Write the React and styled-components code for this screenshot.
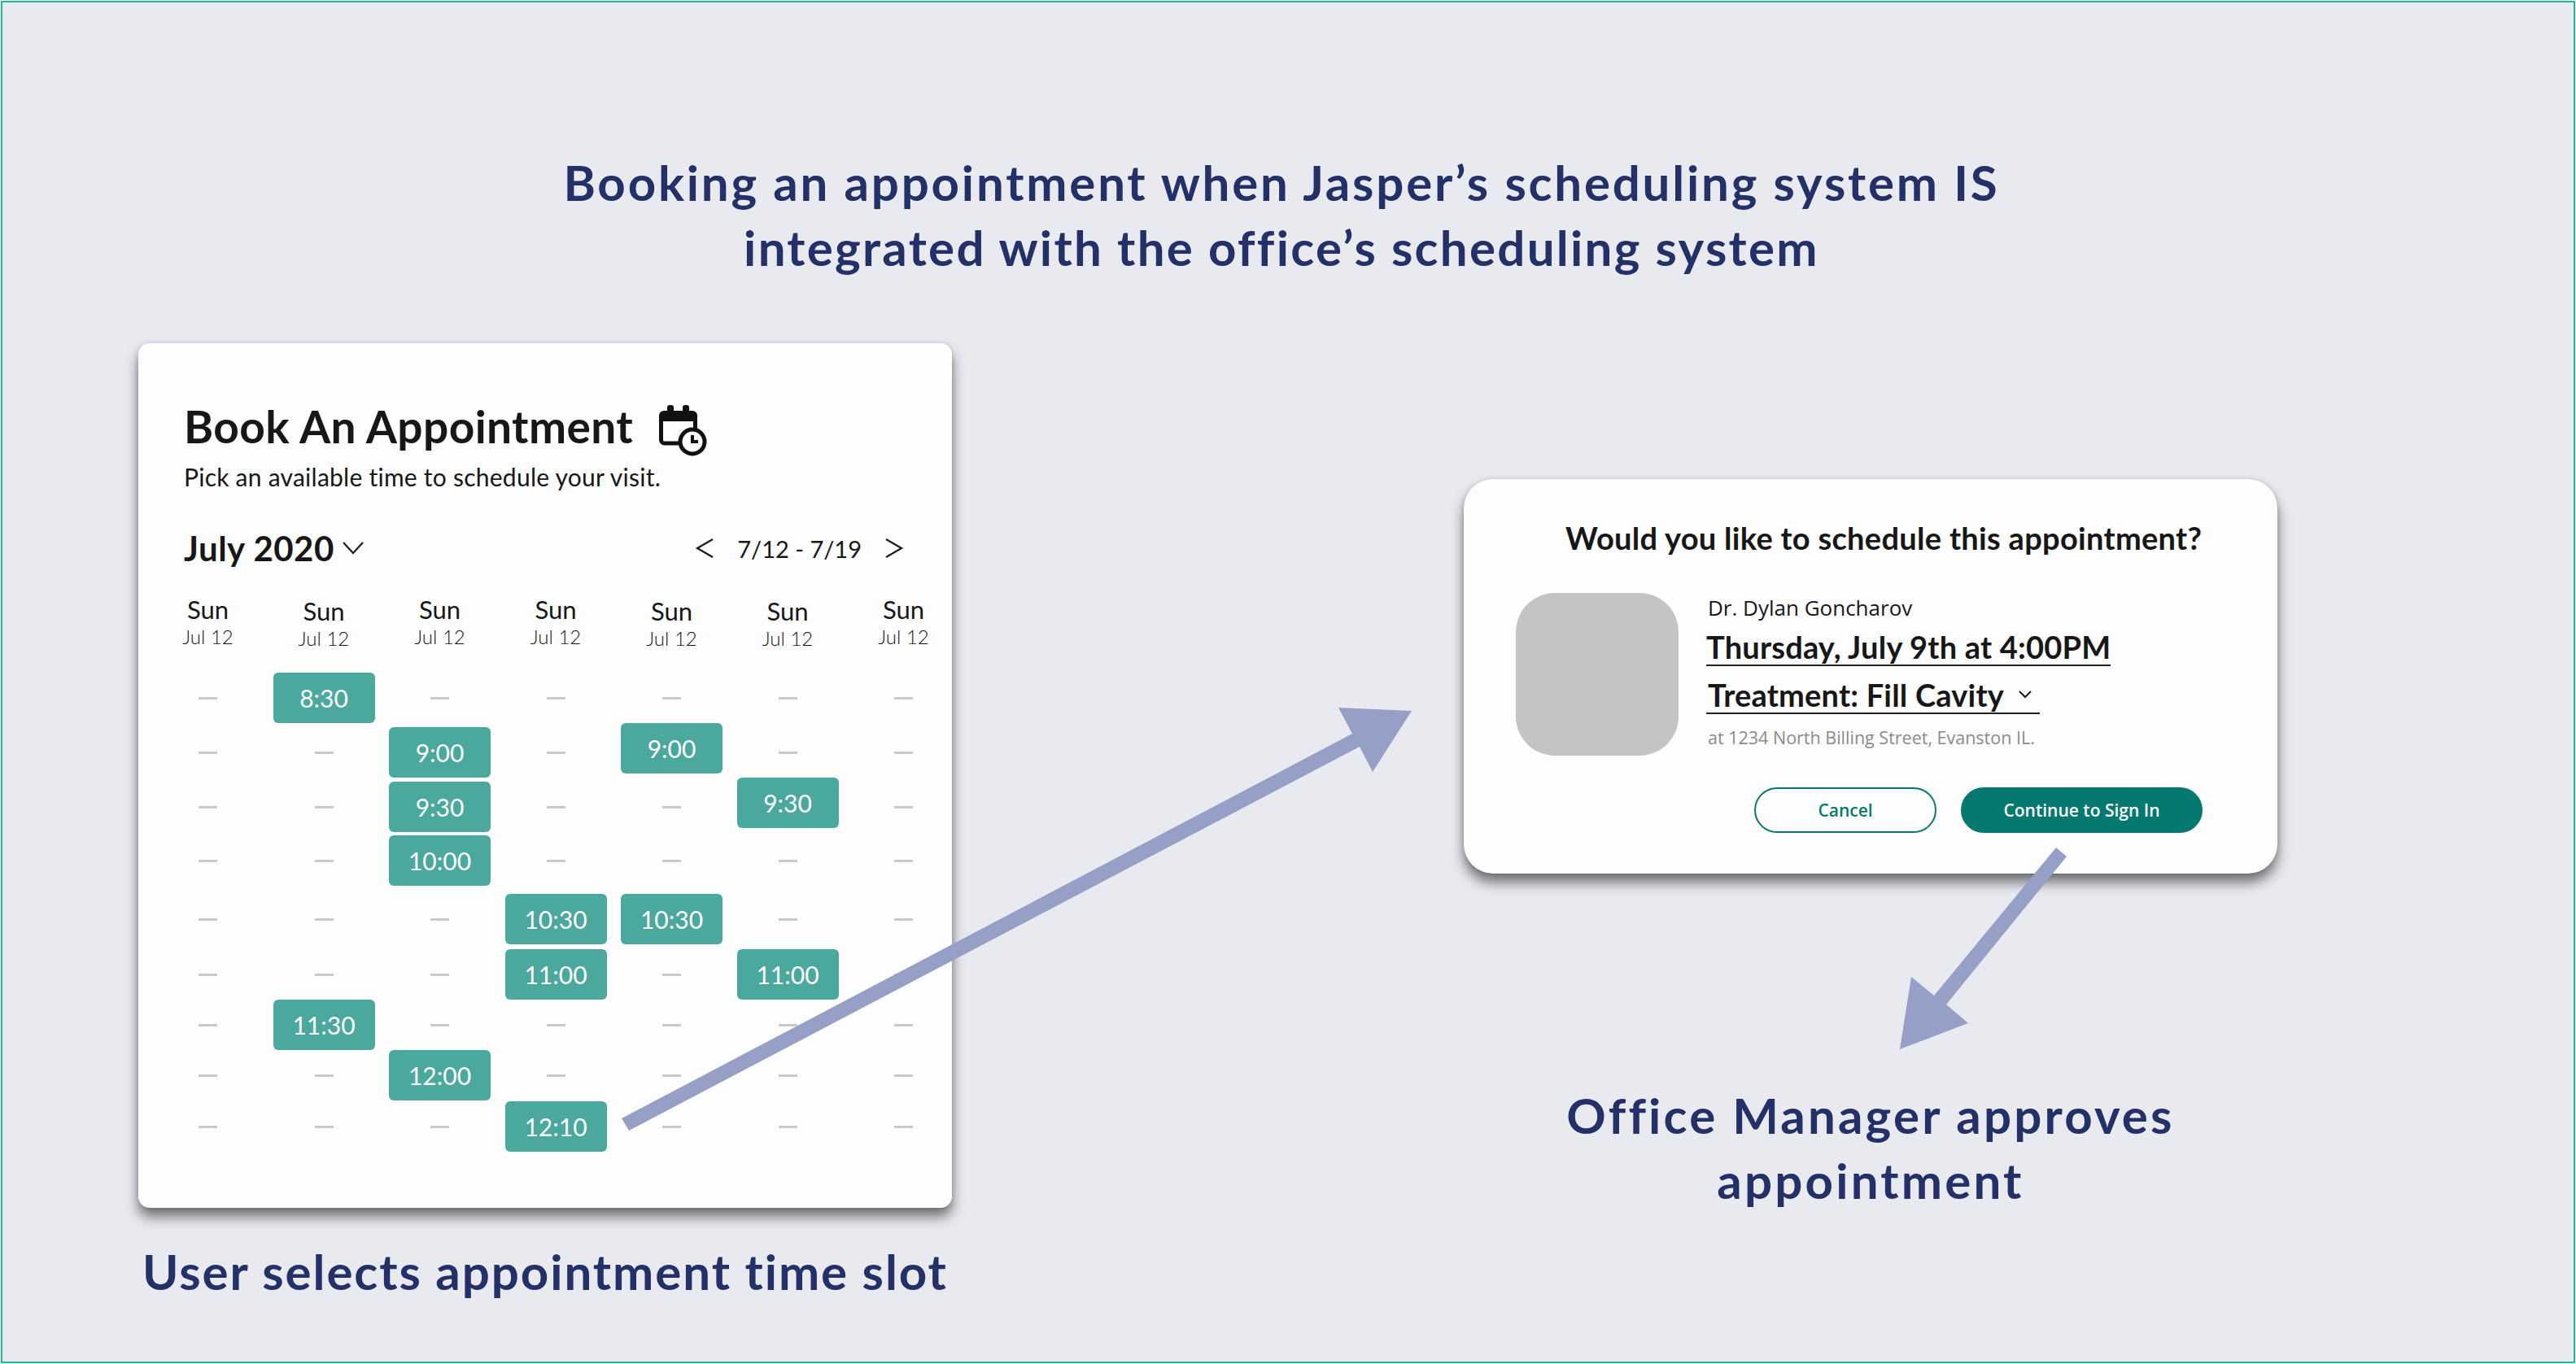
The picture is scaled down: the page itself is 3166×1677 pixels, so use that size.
import React from 'react';
import styled, { createGlobalStyle } from 'styled-components';

const GlobalStyle = createGlobalStyle`
  html, body {
    margin: 0;
    padding: 0;
    background: #ffffff;
  }
`;

const Page = styled.div`
  position: relative;
  box-sizing: border-box;
  width: 3164px;
  height: 1675px;
  margin: 1px;
  border: 2px solid #1fb893;
  background: #e9eaf0;
  color: #243169;
  font-family: 'Lato', sans-serif;
  overflow: hidden;
`;

const Heading = styled.h1`
  width: 2000px;
  margin: 0 0 0 572px;
  padding-top: 181px;
  font-size: 60px;
  line-height: 80px;
  font-weight: 700;
  text-align: center;
`;

const HeadingLine = styled.div`
  letter-spacing: ${(p) => p.$spacing}px;
`;

const Columns = styled.div`
  display: flex;
  align-items: flex-start;
  gap: 629px;
  padding: 78px 0 0 167px;
`;

const Column = styled.div`
  width: 1000px;
  flex: none;
  padding-top: ${(p) => p.$top || 0}px;
`;

const Caption = styled.div`
  margin-top: ${(p) => p.$top}px;
  font-size: 60px;
  line-height: 80px;
  font-weight: 700;
  letter-spacing: ${(p) => p.$spacing}px;
  text-align: center;
`;

const Card = styled.section`
  box-sizing: border-box;
  background: #fdfdfd;
  color: #171717;
  box-shadow: 0 11px 16px rgba(0, 0, 0, 0.52), 0 0 6px rgba(0, 0, 0, 0.12);
`;

const BookingCard = styled(Card)`
  height: 1063px;
  padding: 64px 0 0 56px;
  border-radius: 14px;
`;

const TitleRow = styled.div`
  display: flex;
  align-items: center;
  gap: 26px;
  height: 76px;
`;

const Title = styled.h2`
  margin: 0;
  font-size: 55px;
  line-height: 76px;
  font-weight: 700;
  letter-spacing: 0.4px;
`;

const IconBox = styled.svg`
  flex: none;
  margin-top: 12px;
`;

const Sub = styled.p`
  margin: 4px 0 0;
  font-size: 30px;
  line-height: 40px;
  letter-spacing: 0.25px;
`;

const MonthBar = styled.div`
  display: flex;
  align-items: center;
  height: 56px;
  margin-top: 40px;
`;

const Month = styled.span`
  font-size: 42px;
  line-height: 56px;
  font-weight: 700;
  letter-spacing: 0.5px;
`;

const WeekNav = styled.div`
  display: flex;
  align-items: center;
  margin-left: auto;
  margin-right: 59px;
  gap: 28px;
  font-size: 29px;
`;

const Grid = styled.div`
  display: flex;
  flex-direction: column;
  margin-left: -33px;
  width: 980px;
`;

const WeekHead = styled.div`
  display: grid;
  grid-template-columns: repeat(7, 125px);
  column-gap: 17.5px;
  margin-top: 28px;
  margin-bottom: 29px;
`;

const Day = styled.div`
  padding-top: ${(p) => (p.$low ? 2 : 0)}px;
  height: 66px;
  text-align: center;
`;

const DayName = styled.div`
  font-size: 31px;
  line-height: 38px;
`;

const DayDate = styled.div`
  font-size: 24px;
  line-height: 30px;
  font-weight: 300;
`;

const SlotRow = styled.div`
  display: grid;
  grid-template-columns: repeat(7, 125px);
  grid-template-rows: 62px;
  column-gap: 17.5px;
  height: 62px;
  margin-top: ${(p) => p.$gap}px;
`;

const Cell = styled.div`
  display: flex;
  align-items: center;
  justify-content: center;
`;

const Dash = styled.span`
  width: 23px;
  height: 3px;
  background: #c9c9c9;
`;

const Slot = styled.button`
  box-sizing: border-box;
  flex: none;
  width: 125px;
  height: 62px;
  margin-bottom: ${(p) => (p.$raised ? 10 : 0)}px;
  padding: 0;
  border: none;
  border-radius: 6px;
  background: #4aa89c;
  color: #ffffff;
  font-family: 'Lato', sans-serif;
  font-size: 30px;
`;

const ModalCard = styled(Card)`
  height: 485px;
  padding: 50px 64px 0;
  border-radius: 36px;
`;

const ModalTitle = styled.h2`
  margin: 0;
  padding-left: 61px;
  font-size: 38px;
  line-height: 44px;
  font-weight: 700;
  letter-spacing: 0.3px;
  white-space: nowrap;
`;

const Doctor = styled.div`
  display: flex;
  gap: 34px;
  margin-top: 46px;
`;

const Avatar = styled.div`
  flex: none;
  width: 200px;
  height: 200px;
  border-radius: 48px;
  background: #c4c4c4;
`;

const Details = styled.div`
  display: flex;
  flex-direction: column;
  align-items: flex-start;
`;

const DoctorName = styled.div`
  margin: 2px 0 0 2px;
  font-family: 'Open Sans', sans-serif;
  font-size: 26px;
  line-height: 32px;
`;

const Underlined = styled.div`
  display: flex;
  align-items: center;
  margin-top: ${(p) => p.$top}px;
  height: 44px;
  padding-left: ${(p) => p.$pad || 0}px;
  border-bottom: 2px solid #222222;
  font-size: 38px;
  line-height: 44px;
  font-weight: 700;
  letter-spacing: 0.2px;
`;

const Address = styled.div`
  margin: 15px 0 0 2px;
  font-family: 'Open Sans', sans-serif;
  font-size: 21.5px;
  line-height: 28px;
  color: #8b8b8b;
`;

const Actions = styled.div`
  display: flex;
  justify-content: flex-end;
  gap: 30px;
  margin: 39px 28px 0 0;
`;

const Pill = styled.button`
  box-sizing: border-box;
  width: ${(p) => p.$width}px;
  height: 56px;
  padding: 0;
  border: 2px solid #05796f;
  border-radius: 28px;
  background: ${(p) => (p.$filled ? '#05796f' : '#fdfdfd')};
  color: ${(p) => (p.$filled ? '#ffffff' : '#05796f')};
  font-family: 'Open Sans', sans-serif;
  font-size: 21px;
  font-weight: 600;
`;

const Arrows = styled.svg`
  position: absolute;
  top: -3px;
  left: -3px;
  pointer-events: none;
`;

const CalendarClock = () => (
  <IconBox width="70" height="75" viewBox="805 495 70 75">
    <rect x="821" y="500" width="8" height="12" rx="3" fill="#111" />
    <rect x="840" y="500" width="8" height="12" rx="3" fill="#111" />
    <path d="M817 507h35a6 6 0 0 1 6 6v7h-47v-7a6 6 0 0 1 6-6z" fill="#111" />
    <path d="M813.5 518v25a4 4 0 0 0 4 4h22M855.5 518v14" fill="none" stroke="#111" strokeWidth="5" />
    <circle cx="852" cy="545" r="15" fill="#fdfdfd" stroke="#111" strokeWidth="5" />
    <path d="M852 537v8h7" fill="none" stroke="#111" strokeWidth="4" />
  </IconBox>
);

const Chevron = ({ w, h, d, stroke = 2.2, style }) => (
  <svg width={w} height={h} viewBox={`0 0 ${w} ${h}`} style={style}>
    <path d={d} fill="none" stroke="#1a1a1a" strokeWidth={stroke} />
  </svg>
);

const days = [false, true, false, false, true, true, false];

const rows = [
  { gap: 0, slots: { 1: '8:30' } },
  { gap: 5, slots: { 2: '9:00', 4: '9:00' }, raised: [4] },
  { gap: 5, slots: { 2: '9:30', 5: '9:30' }, raised: [5] },
  { gap: 4, slots: { 2: '10:00' } },
  { gap: 10, slots: { 3: '10:30', 4: '10:30' } },
  { gap: 6, slots: { 3: '11:00', 5: '11:00' } },
  { gap: 0, slots: { 1: '11:30' } },
  { gap: 0, slots: { 2: '12:00' } },
  { gap: 1, slots: { 3: '12:10' } },
];

const App = () => (
  <Page>
    <GlobalStyle />
    <Heading>
      <HeadingLine $spacing={2.8}>Booking an appointment when Jasper’s scheduling system IS</HeadingLine>
      <HeadingLine $spacing={2.3}>integrated with the office’s scheduling system</HeadingLine>
    </Heading>
    <Columns>
      <Column>
        <BookingCard>
          <TitleRow>
            <Title>Book An Appointment</Title>
            <CalendarClock />
          </TitleRow>
          <Sub>Pick an available time to schedule your visit.</Sub>
          <MonthBar>
            <Month>July 2020</Month>
            <Chevron w={26} h={16} d="M1 1l12 13L25 1" style={{ marginLeft: 10 }} />
            <WeekNav>
              <Chevron w={24} h={24} d="M22 1L3 12l19 11" />
              <span>7/12 - 7/19</span>
              <Chevron w={24} h={24} d="M2 1l19 11L2 23" />
            </WeekNav>
          </MonthBar>
          <Grid>
            <WeekHead>
              {days.map((low, i) => (
                <Day key={i} $low={low}>
                  <DayName>Sun</DayName>
                  <DayDate>Jul 12</DayDate>
                </Day>
              ))}
            </WeekHead>
            {rows.map((row, r) => (
              <SlotRow key={r} $gap={row.gap}>
                {days.map((_, c) => (
                  <Cell key={c}>
                    {row.slots[c] ? (
                      <Slot $raised={row.raised && row.raised.includes(c)}>{row.slots[c]}</Slot>
                    ) : (
                      <Dash />
                    )}
                  </Cell>
                ))}
              </SlotRow>
            ))}
          </Grid>
        </BookingCard>
        <Caption $top={38} $spacing={1.95}>User selects appointment time slot</Caption>
      </Column>
      <Column $top={167}>
        <ModalCard>
          <ModalTitle>Would you like to schedule this appointment?</ModalTitle>
          <Doctor>
            <Avatar />
            <Details>
              <DoctorName>Dr. Dylan Goncharov</DoctorName>
              <Underlined $top={10}>Thursday, July 9th at 4:00PM</Underlined>
              <Underlined $top={13} $pad={2}>
                Treatment: Fill Cavity
                <Chevron w={16} h={10} d="M1 1l7 7 7-7" stroke={2} style={{ margin: '0 10px 0 18px' }} />
              </Underlined>
              <Address>at 1234 North Billing Street, Evanston IL.</Address>
            </Details>
          </Doctor>
          <Actions>
            <Pill $width={224}>Cancel</Pill>
            <Pill $width={297} $filled>
              Continue to Sign In
            </Pill>
          </Actions>
        </ModalCard>
        <Caption $top={257} $spacing={3.2}>
          Office Manager approves
          <br />
          appointment
        </Caption>
      </Column>
    </Columns>
    <Arrows width="3166" height="1677" viewBox="0 0 3166 1677">
      <polygon
        points="764,1375 1662,902 1645,870 1735,874 1687,949 1671,918 773,1390"
        fill="#96a0c6"
      />
      <polygon
        points="2527,1042 2540,1053 2392,1235 2419,1258 2335,1290 2349,1201 2377,1224"
        fill="#96a0c6"
      />
    </Arrows>
  </Page>
);

export default App;
